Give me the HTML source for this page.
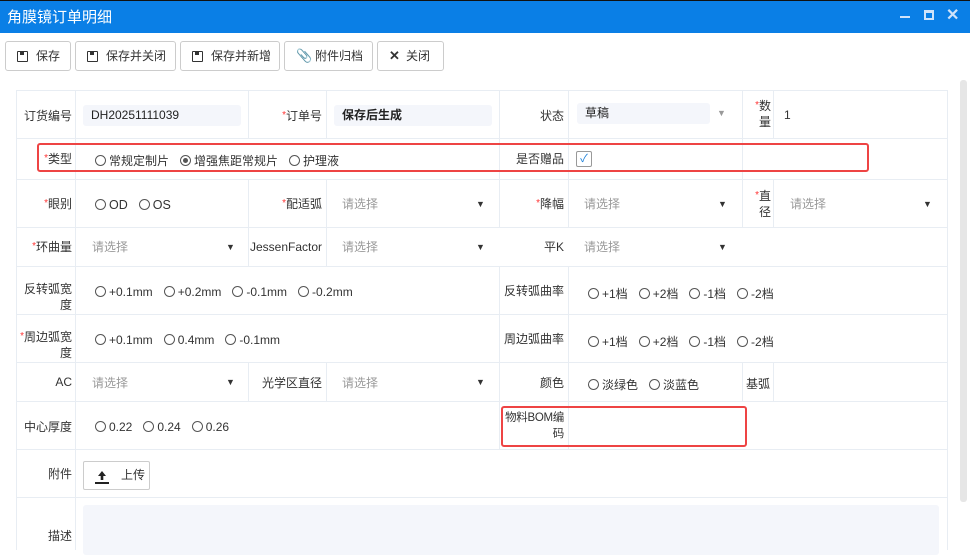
<!DOCTYPE html>
<html><head><meta charset="utf-8"><style>
*{box-sizing:border-box;margin:0;padding:0}
body{width:970px;height:550px;overflow:hidden;background:#fff;font-family:"Liberation Sans","Noto Sans CJK SC",sans-serif;font-size:12px;color:#333;position:relative}
.a{position:absolute}
.title{left:0;top:0;width:970px;height:33px;background:#0a7fe6;border-top:1px solid #111}
.title span{position:absolute;left:7px;top:5px;color:#fff;font-size:15px}
.btn{top:41px;height:30px;border:1px solid #ccc;border-radius:3px;background:#fff;font-size:12px;line-height:28px;padding-left:30px}
.btn i{position:absolute;left:11px;top:9px;width:11px;height:11px;border:1.5px solid #333;border-radius:1px}
.btn i:after{content:"";position:absolute;left:2px;top:-1px;width:4px;height:4px;background:#333}
.hl{height:1px;background:#e8edf3}
.vl{width:1px;background:#e8edf3}
.lb{text-align:right;font-size:12px;line-height:16px}
.r{color:#f33;font-size:10px;vertical-align:top}
.inp{background:#f4f6fb;border-radius:3px;height:21px;line-height:21px;padding-left:8px}
.ph{color:#999}
.arr{font-size:9px;color:#333}
.rad{display:inline-block;width:11px;height:11px;border:1px solid #555;border-radius:50%;vertical-align:-1px;margin-right:3px;position:relative}
.rad.on:after{content:"";position:absolute;left:2px;top:2px;width:5px;height:5px;background:#555;border-radius:50%}
.opt{margin-right:11px}
.red{border:2px solid #ee4444;border-radius:3px}
</style></head><body>
<div class="a title"><span>角膜镜订单明细</span>
<div class="a" style="left:900px;top:15px;width:10px;height:2px;background:#cfe3fa"></div>
<div class="a" style="left:924px;top:9px;width:10px;height:10px;border:2px solid #cfe3fa;border-top-width:3px"></div>
<div class="a" style="left:946px;top:4px;color:#cfe3fa;font-size:16px;font-weight:bold">✕</div>
</div>
<div class="a btn" style="left:5px;width:66px"><i></i>保存</div>
<div class="a btn" style="left:75px;width:101px"><i></i>保存并关闭</div>
<div class="a btn" style="left:180px;width:100px"><i></i>保存并新增</div>
<div class="a btn" style="left:284px;width:89px"><span class="a" style="left:11px;top:0;font-size:13px">📎</span>附件归档</div>
<div class="a btn" style="left:377px;width:67px;padding-left:28px"><span class="a" style="left:11px;top:0;font-weight:bold;font-size:13px">✕</span>关闭</div>

<div class="a" style="left:960px;top:80px;width:7px;height:422px;background:#e6e6e6;border-radius:3px"></div>

<div class="a hl" style="left:16px;top:90px;width:931px"></div>
<div class="a hl" style="left:16px;top:138px;width:931px"></div>
<div class="a hl" style="left:16px;top:179px;width:931px"></div>
<div class="a hl" style="left:16px;top:227px;width:931px"></div>
<div class="a hl" style="left:16px;top:266px;width:931px"></div>
<div class="a hl" style="left:16px;top:314px;width:931px"></div>
<div class="a hl" style="left:16px;top:362px;width:931px"></div>
<div class="a hl" style="left:16px;top:401px;width:931px"></div>
<div class="a hl" style="left:16px;top:449px;width:931px"></div>
<div class="a hl" style="left:16px;top:497px;width:931px"></div>
<div class="a vl" style="left:16px;top:90px;height:460px"></div>
<div class="a vl" style="left:75px;top:90px;height:460px"></div>
<div class="a vl" style="left:947px;top:90px;height:460px"></div>
<div class="a vl" style="left:248px;top:90px;height:48px"></div>
<div class="a vl" style="left:326px;top:90px;height:48px"></div>
<div class="a vl" style="left:499px;top:90px;height:137px"></div>
<div class="a vl" style="left:568px;top:90px;height:137px"></div>
<div class="a vl" style="left:742px;top:90px;height:137px"></div>
<div class="a vl" style="left:773px;top:90px;height:48px"></div>
<div class="a vl" style="left:773px;top:179px;height:48px"></div>
<div class="a vl" style="left:248px;top:179px;height:88px"></div>
<div class="a vl" style="left:326px;top:179px;height:88px"></div>
<div class="a vl" style="left:499px;top:266px;height:183px"></div>
<div class="a vl" style="left:568px;top:266px;height:183px"></div>
<div class="a vl" style="left:248px;top:362px;height:39px"></div>
<div class="a vl" style="left:326px;top:362px;height:39px"></div>
<div class="a vl" style="left:742px;top:362px;height:39px"></div>
<div class="a vl" style="left:773px;top:362px;height:39px"></div>

<div class="a lb" style="left:16px;top:108px;width:56px">订货编号</div>
<div class="a inp" style="left:83px;top:105px;width:158px;color:#222">DH20251111039</div>
<div class="a lb" style="left:250px;top:108px;width:72px"><span class="r">*</span>订单号</div>
<div class="a inp" style="left:334px;top:105px;width:158px;color:#222;font-weight:bold">保存后生成</div>
<div class="a lb" style="left:500px;top:108px;width:64px">状态</div>
<div class="a inp" style="left:577px;top:103px;width:133px;color:#222">草稿</div>
<div class="a" style="left:717px;top:108px;font-size:9px;color:#999">▼</div>
<div class="a lb" style="left:743px;top:98px;width:28px"><span class="r">*</span>数<br>量</div>
<div class="a" style="left:784px;top:108px">1</div>

<div class="a red" style="left:37px;top:143px;width:832px;height:29px"></div>
<div class="a lb" style="left:16px;top:151px;width:56px"><span class="r">*</span>类型</div>
<div class="a" style="left:95px;top:152px"><span class="opt"><span class="rad"></span>常规定制片</span><span class="opt"><span class="rad on"></span>增强焦距常规片</span><span><span class="rad"></span>护理液</span></div>
<div class="a lb" style="left:500px;top:151px;width:64px">是否赠品</div>
<div class="a" style="left:576px;top:151px;width:16px;height:16px;border:1px solid #999;border-radius:2px;color:#1a7fd8;font-size:11px;line-height:14px;text-align:center">✓</div>

<div class="a lb" style="left:16px;top:196px;width:56px"><span class="r">*</span>眼别</div>
<div class="a" style="left:95px;top:198px;font-size:12.5px"><span class="opt"><span class="rad"></span>OD</span><span><span class="rad"></span>OS</span></div>
<div class="a lb" style="left:250px;top:196px;width:72px"><span class="r">*</span>配适弧</div>
<div class="a ph" style="left:342px;top:195px">请选择</div><div class="a arr" style="left:476px;top:199px">▼</div>
<div class="a lb" style="left:500px;top:196px;width:64px"><span class="r">*</span>降幅</div>
<div class="a ph" style="left:584px;top:195px">请选择</div><div class="a arr" style="left:718px;top:199px">▼</div>
<div class="a lb" style="left:743px;top:188px;width:28px"><span class="r">*</span>直<br>径</div>
<div class="a ph" style="left:790px;top:195px">请选择</div><div class="a arr" style="left:923px;top:199px">▼</div>

<div class="a lb" style="left:16px;top:239px;width:56px"><span class="r">*</span>环曲量</div>
<div class="a ph" style="left:92px;top:238px">请选择</div><div class="a arr" style="left:226px;top:242px">▼</div>
<div class="a lb" style="left:250px;top:239px;width:72px">JessenFactor</div>
<div class="a ph" style="left:342px;top:238px">请选择</div><div class="a arr" style="left:476px;top:242px">▼</div>
<div class="a lb" style="left:500px;top:239px;width:64px">平K</div>
<div class="a ph" style="left:584px;top:238px">请选择</div><div class="a arr" style="left:718px;top:242px">▼</div>

<div class="a lb" style="left:16px;top:281px;width:56px">反转弧宽<br>度</div>
<div class="a" style="left:95px;top:285px"><span class="opt"><span class="rad"></span>+0.1mm</span><span class="opt"><span class="rad"></span>+0.2mm</span><span class="opt"><span class="rad"></span>-0.1mm</span><span><span class="rad"></span>-0.2mm</span></div>
<div class="a lb" style="left:500px;top:283px;width:64px">反转弧曲率</div>
<div class="a" style="left:588px;top:285px"><span class="opt"><span class="rad"></span>+1档</span><span class="opt"><span class="rad"></span>+2档</span><span class="opt"><span class="rad"></span>-1档</span><span><span class="rad"></span>-2档</span></div>

<div class="a lb" style="left:16px;top:329px;width:56px"><span class="r">*</span>周边弧宽<br>度</div>
<div class="a" style="left:95px;top:333px"><span class="opt"><span class="rad"></span>+0.1mm</span><span class="opt"><span class="rad"></span>0.4mm</span><span><span class="rad"></span>-0.1mm</span></div>
<div class="a lb" style="left:500px;top:331px;width:64px">周边弧曲率</div>
<div class="a" style="left:588px;top:333px"><span class="opt"><span class="rad"></span>+1档</span><span class="opt"><span class="rad"></span>+2档</span><span class="opt"><span class="rad"></span>-1档</span><span><span class="rad"></span>-2档</span></div>

<div class="a lb" style="left:16px;top:374px;width:56px">AC</div>
<div class="a ph" style="left:92px;top:374px">请选择</div><div class="a arr" style="left:226px;top:377px">▼</div>
<div class="a lb" style="left:250px;top:375px;width:72px">光学区直径</div>
<div class="a ph" style="left:342px;top:374px">请选择</div><div class="a arr" style="left:476px;top:377px">▼</div>
<div class="a lb" style="left:500px;top:375px;width:64px">颜色</div>
<div class="a" style="left:588px;top:376px"><span class="opt"><span class="rad"></span>淡绿色</span><span><span class="rad"></span>淡蓝色</span></div>
<div class="a" style="left:746px;top:375px">基弧</div>

<div class="a lb" style="left:16px;top:419px;width:56px">中心厚度</div>
<div class="a" style="left:95px;top:420px"><span class="opt"><span class="rad"></span>0.22</span><span class="opt"><span class="rad"></span>0.24</span><span><span class="rad"></span>0.26</span></div>
<div class="a red" style="left:501px;top:406px;width:246px;height:41px"></div>
<div class="a lb" style="left:500px;top:410px;width:64px;font-size:11.5px;letter-spacing:-0.3px">物料BOM编<br>码</div>

<div class="a lb" style="left:16px;top:466px;width:56px">附件</div>
<div class="a" style="left:83px;top:461px;width:67px;height:29px;border:1px solid #ccc;border-radius:2px;line-height:27px;padding-left:37px">上传
<svg class="a" style="left:11px;top:7px" width="14" height="15" viewBox="0 0 14 15"><path d="M7 2 L11 7 H8.3 V11 H5.7 V7 H3 Z" fill="#222"/><rect x="0" y="13" width="14" height="2" fill="#222"/></svg></div>

<div class="a lb" style="left:16px;top:528px;width:56px">描述</div>
<div class="a" style="left:83px;top:505px;width:856px;height:50px;background:#f4f6fb;border-radius:3px"></div>
</body></html>
